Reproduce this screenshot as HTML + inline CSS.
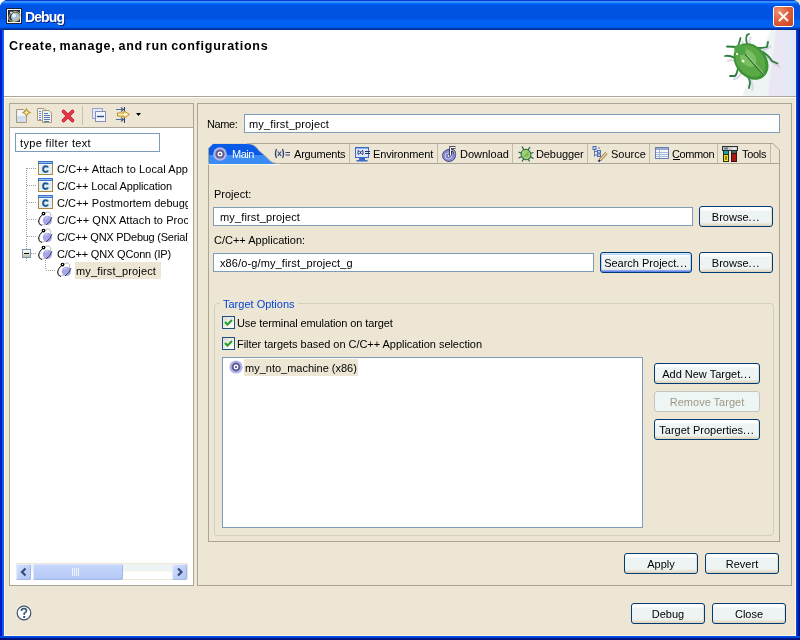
<!DOCTYPE html>
<html><head><meta charset="utf-8">
<style>
*{margin:0;padding:0;box-sizing:border-box}
html,body{width:800px;height:640px;overflow:hidden;background:#fff}
body{font-family:"Liberation Sans",sans-serif;font-size:11px;line-height:13px;color:#000;position:relative;letter-spacing:0}
.a{position:absolute}
.t{position:absolute;white-space:nowrap}
.inp{position:absolute;background:#fff;border:1px solid #7f9db9}
.btn{position:absolute;border:1px solid #003c74;border-radius:3px;background:linear-gradient(#fff 0,#fff 3px,#eef4f4 4px,#eef4f4 calc(100% - 4px),#e8e4d6 calc(100% - 2px),#d8d0bc 100%);box-shadow:inset -1px 0 #e4e0d2;text-align:center;white-space:nowrap}
.btn span{position:absolute;left:0;right:0;top:4px}
.pan{position:absolute;border:1px solid #aca596}
svg{position:absolute;overflow:visible}
</style></head><body><div style="position:absolute;left:0;top:0;width:800px;height:640px;will-change:transform">
<!-- window frame -->
<div class="a" style="left:760px;top:0;width:40px;height:30px;background:#ede6d5"></div>
<div class="a" style="left:0;top:0;width:800px;height:640px;border-radius:8px 8px 0 0;overflow:hidden;background:#001a8c">
 <div class="a" style="left:0;top:0;width:800px;height:30px;background:linear-gradient(#0a3cd0 0,#0a3cd0 1px,#3590ff 1px,#3590ff 3px,#0062f8 3px,#0062f8 5px,#0052e2 5px,#0052e2 19px,#0060f2 20px,#0062f4 27px,#0046cc 28px,#0030a0 29px,#002a90 30px)"></div>
 <div class="a" style="left:0;top:30px;width:4px;height:606px;background:linear-gradient(90deg,#0019cf 0,#0019cf 2px,#0855dd 2px,#0a6af0 4px)"></div>
 <div class="a" style="left:796px;top:30px;width:4px;height:606px;background:linear-gradient(90deg,#0055f0 0,#0040d8 1px,#0020a8 2px,#001090 4px)"></div>
 <div class="a" style="left:0;top:636px;width:800px;height:4px;background:linear-gradient(#0050e8 0,#0040d8 2px,#001a8c 2px,#001070 4px)"></div>
 <div class="a" style="left:4px;top:30px;width:792px;height:606px;background:#ede6d5"></div>
 <div class="a" style="left:4px;top:98px;width:1px;height:538px;background:#fff8e0"></div>
 <div class="a" style="left:4px;top:635px;width:792px;height:1px;background:#fff8e0"></div>
 <div class="a" style="left:795px;top:98px;width:1px;height:538px;background:#fff8e0"></div>
 <div class="a" style="left:4px;top:30px;width:792px;height:66px;background:#fff"></div>
</div>
<!-- title icon -->
<svg style="left:6px;top:8px" width="16" height="16" viewBox="0 0 16 16">
 <rect x="0.5" y="0.5" width="15" height="15" fill="#fff" stroke="#18243a"/>
 <rect x="2" y="2" width="12" height="12" fill="#1a2c4c"/>
 <circle cx="9.5" cy="9" r="4.5" fill="#a8c0d8"/>
 <circle cx="8" cy="7.5" r="2" fill="#e8f2fa"/>
 <ellipse cx="8.5" cy="8.5" rx="6" ry="4.5" transform="rotate(-30 8.5 8.5)" fill="none" stroke="#d8b850" stroke-width="1"/>
 <circle cx="5" cy="4.5" r="1" fill="#f0f0f0"/>
</svg>
<div class="t" style="left:25px;top:9px;font-size:14px;line-height:16px;font-weight:bold;color:#fff;letter-spacing:-0.9px;text-shadow:1px 1px #0a1f7d">Debug</div>
<!-- close button -->
<div class="a" style="left:773px;top:6px;width:21px;height:21px;border:1px solid #fff;border-radius:3px;background:radial-gradient(circle at 25% 25%,#f09070 0,#e0603c 45%,#c8401e 100%)"></div>
<svg style="left:773px;top:6px" width="21" height="21"><path d="M6 6L15 15M15 6L6 15" stroke="#fff" stroke-width="1.8"/></svg>

<!-- header -->
<div class="t" style="left:9px;top:39px;font-weight:bold;font-size:12.5px;line-height:14px;letter-spacing:0.75px;word-spacing:-1.3px">Create, manage, and run configurations</div>
<!-- bug -->
<svg style="left:700px;top:30px" width="96" height="66" viewBox="700 30 96 66">
 <path d="M771 30 L796 30 L796 96 L742 96 Z" fill="#eef4f4"/>
 <path d="M776 30 L796 30 L796 96 L768 96 Z" fill="#ebe6f4"/>
 <path d="M786 30 L796 30 L796 96 L784 96 Z" fill="#e2e8f6"/>
 <g stroke="#c8c0dc" stroke-width="2" fill="none" opacity="0.6">
  <path d="M740 50 L743 41M750 49 Q748 42 751 37M755 50 Q765 52 771 46M765 56 Q772 63 780 67M740 62 Q732 59 727 61M742 72 Q739 79 733 79M749 77 Q754 84 752 91"/>
 </g>
 <g stroke="#2e7e3e" stroke-width="1.8" fill="none" stroke-linecap="round">
  <path d="M738 47 L740.5 38"/><path d="M737 47 L727 46.5"/>
  <path d="M748 46 Q745 40 747 35 L749 34"/><path d="M752 47 Q760 49 767 47 L768 42"/>
  <path d="M763 52 Q770 57 772 61 L777.5 63.5"/><path d="M735 58 Q729 55 725 56"/>
  <path d="M738 68 Q737 74 735 76 L730 76"/><path d="M745 73 Q750 79 750 83 L749 88"/>
 </g>
 <ellipse cx="751" cy="61.5" rx="20" ry="15.5" transform="rotate(50 751 61.5)" fill="#3f9436"/>
 <ellipse cx="750.5" cy="61" rx="17.5" ry="13" transform="rotate(50 750.5 61)" fill="#5aa846"/>
 <ellipse cx="748" cy="58" rx="10" ry="7" transform="rotate(50 748 58)" fill="#78c060"/>
 <ellipse cx="740" cy="50" rx="6" ry="5" transform="rotate(30 740 50)" fill="#4fa444"/>
 <path d="M745 54 L763 74" stroke="#2a6a2a" stroke-width="1.4"/>
 <path d="M746.5 54.5 L763.5 73.5" stroke="#c8ecb8" stroke-width="0.8"/>
 <circle cx="743" cy="61" r="1.5" fill="#e8f4e0"/>
 <circle cx="737" cy="54" r="1.2" fill="#e8f4e0"/>
</svg>
<!-- separator -->
<div class="a" style="left:4px;top:96px;width:792px;height:1px;background:#aca596"></div>
<div class="a" style="left:4px;top:97px;width:792px;height:1px;background:#fff"></div>

<!-- LEFT PANEL -->
<div class="pan" style="left:9px;top:103px;width:185px;height:483px;background:#fff"></div>
<div class="a" style="left:10px;top:104px;width:183px;height:24px;background:#ede6d5;border-bottom:1px solid #aca596"></div>
<!-- toolbar icons -->
<svg style="left:16px;top:108px" width="16" height="16" viewBox="0 0 16 16">
 <path d="M0.5 1.5H7.5L10.5 4.5V14.5H0.5Z" fill="#f0f4fa" stroke="#a89a70"/>
 <rect x="1" y="8" width="9" height="6" fill="#d2def0"/>
 <path d="M10.5 0.5L11.6 3.4L14.5 4.5L11.6 5.6L10.5 8.5L9.4 5.6L6.5 4.5L9.4 3.4Z" fill="#fff0a0" stroke="#b08a20" stroke-width="1"/>
</svg>
<svg style="left:37px;top:108px" width="16" height="16" viewBox="0 0 16 16">
 <path d="M0.5 0.5H7L9.5 3V12.5H0.5Z" fill="#eef2f8" stroke="#a89a70"/>
 <path d="M5.5 2.5H12L14.5 5V14.5H5.5Z" fill="#eef2f8" stroke="#a89a70"/>
 <path d="M2 3.5H4M2 5.5H4M2 7.5H4M2 9.5H4M2 11.5H4" stroke="#7890b8" stroke-width="1"/>
 <path d="M7 5.5H11M7 7.5H13M7 9.5H13M7 11.5H13M7 13.5H12" stroke="#5878b0" stroke-width="1"/>
</svg>
<svg style="left:60px;top:108px" width="16" height="16" viewBox="0 0 16 16">
 <path d="M3.5 3.5L12.5 12.5M12.5 3.5L3.5 12.5" stroke="#c01830" stroke-width="3.6" stroke-linecap="round"/>
 <path d="M3.5 3.5L12.5 12.5M12.5 3.5L3.5 12.5" stroke="#e83848" stroke-width="2.2" stroke-linecap="round"/>
</svg>
<div class="a" style="left:82px;top:106px;width:1px;height:19px;background:#c5c2b2"></div>
<svg style="left:92px;top:108px" width="16" height="16" viewBox="0 0 16 16">
 <rect x="0.5" y="0.5" width="10" height="10" fill="#dfe8f6" stroke="#9aa4cc"/>
 <rect x="3.5" y="3.5" width="10" height="10" fill="#f2f6fc" stroke="#8a8cb8"/>
 <path d="M5 8.5H12" stroke="#2a4a8a" stroke-width="1.4"/>
</svg>
<svg style="left:114px;top:107px" width="17" height="16" viewBox="0 0 17 16">
 <path d="M2 2.5H9M2 12.5H9" stroke="#5a6c96" stroke-width="1"/>
 <path d="M7 0.5L9.5 2.5L7 4.5M7 10.5L9.5 12.5L7 14.5" stroke="#4a5c86" stroke-width="1.2" fill="none"/>
 <path d="M10.5 0V5M10.5 10V16" stroke="#2a3c6e" stroke-width="1"/>
 <path d="M3.5 6H10V4L15.5 7.5L10 11V9H3.5Z" fill="#fff2c0" stroke="#c08a18" stroke-width="1"/>
</svg>
<svg style="left:136px;top:113px" width="6" height="4"><path d="M0 0H5L2.5 3Z" fill="#000"/></svg>

<div class="inp t" style="left:15px;top:133px;width:145px;height:19px;padding:3px 0 0 4px;letter-spacing:0.35px">type filter text</div>

<!-- tree -->
<svg style="left:0;top:0" width="200" height="300">
 <path d="M26.5 168V250M26.5 258V262" stroke="#a0a0a0" stroke-dasharray="1 1" fill="none"/>
 <path d="M27 168.5H37M27 185.5H37M27 202.5H37M27 219.5H37M27 236.5H37M31 253.5H37M45.5 258V270M46 270.5H56" stroke="#a0a0a0" stroke-dasharray="1 1" fill="none"/>
</svg>
<div class="a" style="left:22px;top:249px;width:9px;height:9px;border:1px solid #7898b5;background:linear-gradient(#fff,#c4bda8)"></div>
<div class="a" style="left:24px;top:253px;width:5px;height:1px;background:#000"></div>

<div id="cicons"></div>
<svg style="left:38px;top:161px" width="15" height="14" viewBox="0 0 15 14"><rect x="0" y="0" width="15" height="14" fill="#a88a3a"/><rect x="1" y="3" width="13" height="10" fill="#e4eef8"/><rect x="1" y="3" width="13" height="1" fill="#f4faff"/><rect x="0" y="0" width="15" height="3" fill="#3a70c8"/><rect x="1" y="1" width="13" height="1" fill="#90c0ee"/><path d="M10 6.6Q9.6 5.2 7.6 5.2Q5.1 5.2 5.1 8.1Q5.1 11 7.6 11Q9.6 11 10 9.6" stroke="#1f5a88" stroke-width="1.9" fill="none"/></svg>
<svg style="left:38px;top:178px" width="15" height="14" viewBox="0 0 15 14"><rect x="0" y="0" width="15" height="14" fill="#a88a3a"/><rect x="1" y="3" width="13" height="10" fill="#e4eef8"/><rect x="1" y="3" width="13" height="1" fill="#f4faff"/><rect x="0" y="0" width="15" height="3" fill="#3a70c8"/><rect x="1" y="1" width="13" height="1" fill="#90c0ee"/><path d="M10 6.6Q9.6 5.2 7.6 5.2Q5.1 5.2 5.1 8.1Q5.1 11 7.6 11Q9.6 11 10 9.6" stroke="#1f5a88" stroke-width="1.9" fill="none"/></svg>
<svg style="left:38px;top:195px" width="15" height="14" viewBox="0 0 15 14"><rect x="0" y="0" width="15" height="14" fill="#a88a3a"/><rect x="1" y="3" width="13" height="10" fill="#e4eef8"/><rect x="1" y="3" width="13" height="1" fill="#f4faff"/><rect x="0" y="0" width="15" height="3" fill="#3a70c8"/><rect x="1" y="1" width="13" height="1" fill="#90c0ee"/><path d="M10 6.6Q9.6 5.2 7.6 5.2Q5.1 5.2 5.1 8.1Q5.1 11 7.6 11Q9.6 11 10 9.6" stroke="#1f5a88" stroke-width="1.9" fill="none"/></svg>
<svg style="left:37px;top:211px" width="16" height="16" viewBox="0 0 16 16"><ellipse cx="8" cy="7.5" rx="7.6" ry="4.3" transform="rotate(-52 8 7.5)" fill="none" stroke="#b8b8c0" stroke-width="0.9"/><path d="M6 3Q2 6 1.5 10Q1.5 14 5 14.5" stroke="#2a2a2a" stroke-width="1" fill="none"/><circle cx="10.4" cy="9.4" r="4.6" fill="#a6a6ea"/><path d="M8 7.5Q9 6 11 6" stroke="#dcdcf8" stroke-width="1" fill="none"/><path d="M15 6Q13.5 11 9 14" stroke="#303040" stroke-width="0.9" fill="none"/><circle cx="6.5" cy="2.6" r="1.9" fill="#000"/><circle cx="6.5" cy="2.4" r="0.6" fill="#fff"/></svg>
<svg style="left:37px;top:228px" width="16" height="16" viewBox="0 0 16 16"><ellipse cx="8" cy="7.5" rx="7.6" ry="4.3" transform="rotate(-52 8 7.5)" fill="none" stroke="#b8b8c0" stroke-width="0.9"/><path d="M6 3Q2 6 1.5 10Q1.5 14 5 14.5" stroke="#2a2a2a" stroke-width="1" fill="none"/><circle cx="10.4" cy="9.4" r="4.6" fill="#a6a6ea"/><path d="M8 7.5Q9 6 11 6" stroke="#dcdcf8" stroke-width="1" fill="none"/><path d="M15 6Q13.5 11 9 14" stroke="#303040" stroke-width="0.9" fill="none"/><circle cx="6.5" cy="2.6" r="1.9" fill="#000"/><circle cx="6.5" cy="2.4" r="0.6" fill="#fff"/></svg>
<svg style="left:37px;top:245px" width="16" height="16" viewBox="0 0 16 16"><ellipse cx="8" cy="7.5" rx="7.6" ry="4.3" transform="rotate(-52 8 7.5)" fill="none" stroke="#b8b8c0" stroke-width="0.9"/><path d="M6 3Q2 6 1.5 10Q1.5 14 5 14.5" stroke="#2a2a2a" stroke-width="1" fill="none"/><circle cx="10.4" cy="9.4" r="4.6" fill="#a6a6ea"/><path d="M8 7.5Q9 6 11 6" stroke="#dcdcf8" stroke-width="1" fill="none"/><path d="M15 6Q13.5 11 9 14" stroke="#303040" stroke-width="0.9" fill="none"/><circle cx="6.5" cy="2.6" r="1.9" fill="#000"/><circle cx="6.5" cy="2.4" r="0.6" fill="#fff"/></svg>
<div class="a" style="left:75px;top:262px;width:86px;height:17px;background:#ede6d5"></div>
<svg style="left:56px;top:262px" width="16" height="16" viewBox="0 0 16 16"><ellipse cx="8" cy="7.5" rx="7.6" ry="4.3" transform="rotate(-52 8 7.5)" fill="none" stroke="#b8b8c0" stroke-width="0.9"/><path d="M6 3Q2 6 1.5 10Q1.5 14 5 14.5" stroke="#2a2a2a" stroke-width="1" fill="none"/><circle cx="10.4" cy="9.4" r="4.6" fill="#a6a6ea"/><path d="M8 7.5Q9 6 11 6" stroke="#dcdcf8" stroke-width="1" fill="none"/><path d="M15 6Q13.5 11 9 14" stroke="#303040" stroke-width="0.9" fill="none"/><circle cx="6.5" cy="2.6" r="1.9" fill="#000"/><circle cx="6.5" cy="2.4" r="0.6" fill="#fff"/></svg>

<div class="a" style="left:57px;top:160px;width:131px;height:120px;overflow:hidden">
 <div class="t" style="left:0;top:3px;letter-spacing:0.08px">C/C++ Attach to Local Application</div>
 <div class="t" style="left:0;top:20px;letter-spacing:-0.1px">C/C++ Local Application</div>
 <div class="t" style="left:0;top:37px">C/C++ Postmortem debugger</div>
 <div class="t" style="left:0;top:54px;letter-spacing:0.08px">C/C++ QNX Attach to Process</div>
 <div class="t" style="left:0;top:71px;letter-spacing:-0.25px">C/C++ QNX PDebug (Serial)</div>
 <div class="t" style="left:0;top:88px;letter-spacing:-0.17px">C/C++ QNX QConn (IP)</div>
</div>
<div class="t" style="left:76px;top:265px;letter-spacing:0.15px">my_first_project</div>

<!-- scrollbar -->
<div class="a" style="left:16px;top:563px;width:172px;height:17px;border:1px solid #efe6d4;border-left:0;background:linear-gradient(#eef4f4 0,#eef4f4 7px,#fdf8ea 7px,#fff 9px)"></div>
<div class="a" style="left:16px;top:564px;width:15px;height:16px;border-radius:3px;background:linear-gradient(135deg,#d6e2fd,#bccff8 60%,#b2c6f6);box-shadow:inset -1px -1px #9fb6ee,inset 1px 1px #e4ecfe"></div>
<svg style="left:16px;top:564px" width="15" height="16"><path d="M9.5 4.5L6 8L9.5 11.5" stroke="#3a4c78" stroke-width="2.2" fill="none"/></svg>
<div class="a" style="left:33px;top:564px;width:90px;height:16px;border-radius:3px;background:linear-gradient(#c8d8fb,#bccff9 50%,#b4c8f6);box-shadow:inset -1px -1px #a0b6ee,inset 1px 1px #d8e4fd"></div>
<svg style="left:72px;top:568px" width="8" height="8"><path d="M0.5 0V8M2.5 0V8M4.5 0V8M6.5 0V8" stroke="#f0f4fe" stroke-width="1"/></svg>
<div class="a" style="left:172px;top:564px;width:15px;height:16px;border-radius:3px;background:linear-gradient(135deg,#d6e2fd,#bccff8 60%,#b2c6f6);box-shadow:inset -1px -1px #9fb6ee,inset 1px 1px #e4ecfe"></div>
<svg style="left:172px;top:564px" width="15" height="16"><path d="M6 4.5L9.5 8L6 11.5" stroke="#3a4c78" stroke-width="2.2" fill="none"/></svg>

<!-- RIGHT PANEL -->
<div class="pan" style="left:197px;top:103px;width:595px;height:483px"></div>
<div class="t" style="left:207px;top:118px;letter-spacing:-0.4px">Name:</div>
<div class="inp t" style="left:244px;top:114px;width:536px;height:19px;padding:3px 0 0 4px;letter-spacing:0.15px">my_first_project</div>

<!-- tabs -->
<div class="a" style="left:208px;top:163px;width:572px;height:379px;border:1px solid #aca596"></div>
<svg style="left:0;top:0" width="800" height="170">
 <defs><clipPath id="mt"><path d="M209 164V148L213 144H247C253 144 256 147 259 151L267 158C271 162 273 164 279 164Z"/></clipPath></defs>
 <path d="M349.5 144V163M437.5 144V163M512.5 144V163M587.5 144V163M649.5 144V163M717.5 144V163M770.5 144V163" stroke="#c0bcac"/>
 <path d="M247 143.5H773L779.5 150V163" stroke="#aca596" fill="none"/>
 <path d="M208.5 165V148" stroke="#aca596" fill="none"/><path d="M208.5 148L213 143.5H247" stroke="#e0d8c0" fill="none"/>
 <path d="M247 143.5C253 143.5 256.5 147 259.5 151L267.5 158C271.5 162 273.5 163.5 279 163.5" stroke="#b8b0a0" fill="none"/>
 <g clip-path="url(#mt)"><rect x="200" y="140" width="90" height="15" fill="#0a5ae8"/><rect x="200" y="155" width="90" height="10" fill="#3a8cf4"/></g>
 <path d="M208 164H209M209 164.5H281" stroke="#fff8e8"/>
</svg>
<svg style="left:213px;top:147px" width="15" height="15" viewBox="0 0 15 15"><circle cx="7" cy="7" r="6.8" fill="#b4b4ea"/><circle cx="7" cy="7" r="4.6" fill="#5c5c92"/><circle cx="7" cy="7" r="2.5" fill="#fff"/><circle cx="7" cy="7" r="1.1" fill="#4a4a80"/></svg>
<div class="t" style="left:232px;top:148px;color:#fff;letter-spacing:-0.5px">Main</div>
<svg style="left:274px;top:148px" width="17" height="12" viewBox="0 0 17 12"><path d="M2.5 1Q0.5 5.5 2.5 10M8.5 1Q10.5 5.5 8.5 10" stroke="#2c446c" stroke-width="1.3" fill="none"/><path d="M3.8 3.5L7.2 8M7.2 3.5L3.8 8" stroke="#2c446c" stroke-width="1.1"/><path d="M11.5 4.5H16M11.5 7H16" stroke="#2c446c" stroke-width="1.1"/></svg>
<div class="t" style="left:294px;top:148px;letter-spacing:-0.2px">Arguments</div>
<svg style="left:355px;top:146px" width="16" height="16" viewBox="0 0 16 16"><rect x="0.5" y="1.5" width="13" height="10" fill="#dce8fc" stroke="#3a6ac8"/><rect x="1" y="2" width="12" height="1" fill="#8ab0f0"/><rect x="4" y="12" width="6" height="2" fill="#3a6ac8"/><rect x="1.5" y="14" width="11" height="1.5" fill="#3a6ac8"/><path d="M3.5 4Q2.3 6.5 3.5 9M7.5 4Q8.7 6.5 7.5 9M4.5 5L6.5 8M6.5 5L4.5 8" stroke="#24346a" stroke-width="1" fill="none"/><path d="M10 5.5H15M10 7.5H15" stroke="#24346a" stroke-width="1"/></svg>
<div class="t" style="left:373px;top:148px;letter-spacing:-0.15px">Environment</div>
<svg style="left:442px;top:146px" width="16" height="16" viewBox="0 0 16 16"><ellipse cx="7" cy="9.5" rx="6.5" ry="6" fill="#8a8cd0" stroke="#4a4a86"/><ellipse cx="6.5" cy="10" rx="3.5" ry="3" fill="none" stroke="#c4c4f0" stroke-width="1"/><circle cx="6.5" cy="10" r="1.3" fill="#fff" stroke="#3a3a70" stroke-width="0.6"/><path d="M8.5 9.5V1.5H13.5M8.5 4Q13 4 13 8.5" stroke="#1c1c40" stroke-width="2.4" fill="none"/><path d="M8.5 9.5V1.5H13.5M8.5 4Q13 4 13 8.5" stroke="#fff" stroke-width="1" fill="none"/></svg>
<div class="t" style="left:460px;top:148px">Download</div>
<svg style="left:518px;top:146px" width="16" height="16" viewBox="0 0 16 16"><g stroke="#1e5a4a" stroke-width="1.2" fill="none"><path d="M4 0.5L6 4M12 1L10 4M0.5 6L4 7.5M15.5 6.5L12 7.5M0.5 12L4 10.5M15.5 12.5L12 10.5M4 15.5L6 12.5M11.5 15.5L10 12.5"/></g><ellipse cx="8" cy="8.5" rx="4.8" ry="5.3" transform="rotate(-30 8 8.5)" fill="#9ed070" stroke="#2a6a4a"/><path d="M5.5 11.5L11 5.5" stroke="#5a9a50" stroke-width="0.8"/><ellipse cx="9" cy="9" rx="2" ry="1.5" fill="#7ab858"/></svg>
<div class="t" style="left:536px;top:148px;letter-spacing:-0.1px">Debugger</div>
<svg style="left:592px;top:146px" width="16" height="16" viewBox="0 0 16 16"><path d="M2.5 2V10.5M2.5 5.5H6M2.5 9H6M6 2H8" stroke="#5a7ac0" fill="none"/><rect x="1" y="0.5" width="3" height="3" fill="#c8d8f4" stroke="#4a6ab0" stroke-width="1"/><rect x="5.5" y="4.5" width="3" height="2.5" fill="#c8d8f4" stroke="#4a6ab0" stroke-width="1"/><rect x="5.5" y="8" width="3" height="2.5" fill="#c8d8f4" stroke="#4a6ab0" stroke-width="1"/><path d="M8 14L14.5 7" stroke="#8a7040" stroke-width="3"/><path d="M8 14L14.5 7" stroke="#f0d890" stroke-width="1.6"/><path d="M6.5 15.5L8 14" stroke="#203060" stroke-width="2"/></svg>
<div class="t" style="left:611px;top:148px">Source</div>
<svg style="left:655px;top:147px" width="14" height="12" viewBox="0 0 14 12"><rect x="0.5" y="0.5" width="13" height="11" fill="#f4f8fc" stroke="#6a80b0"/><rect x="1" y="1" width="12" height="2" fill="#96aad0"/><path d="M1 5.5H13M1 7.5H13M1 9.5H13M4.5 3V11" stroke="#a4b8dc"/></svg>
<div class="t" style="left:672px;top:148px;letter-spacing:-0.4px">Common</div>
<div class="a" style="left:673px;top:159px;width:7px;height:1px;background:#000"></div>
<svg style="left:722px;top:146px" width="16" height="16" viewBox="0 0 16 16"><rect x="0.5" y="0.5" width="15" height="4" fill="#c8cccc" stroke="#283030"/><rect x="2" y="1.5" width="4" height="2" fill="#707878"/><rect x="10" y="1.5" width="4" height="2" fill="#f0f0f0"/><rect x="1.5" y="4.5" width="5" height="4" fill="#20a0a0" stroke="#183838"/><rect x="1.5" y="8.5" width="5" height="7" fill="#f0e020" stroke="#303010"/><path d="M4 10V14" stroke="#303010"/><rect x="9.5" y="4.5" width="5" height="3" fill="#506060" stroke="#183838"/><rect x="9.5" y="7.5" width="5" height="8" fill="#a81818" stroke="#401010"/></svg>
<div class="t" style="left:742px;top:148px;letter-spacing:-0.3px">Tools</div>

<!-- main tab content -->
<div class="t" style="left:214px;top:188px">Project:</div>
<div class="inp t" style="left:213px;top:207px;width:480px;height:19px;padding:3px 0 0 6px;letter-spacing:0.15px">my_first_project</div>
<div class="btn" style="left:699px;top:206px;width:74px;height:21px"><span>Browse<i style="font-style:normal;letter-spacing:0.8px">...</i></span></div>
<div class="t" style="left:214px;top:234px">C/C++ Application:</div>
<div class="inp t" style="left:213px;top:253px;width:381px;height:19px;padding:3px 0 0 6px;letter-spacing:0.12px">x86/o-g/my_first_project_g</div>
<div class="btn" style="left:600px;top:252px;width:92px;height:21px;box-shadow:inset 0 1px #cee7ff,inset 0 -1px #6982ee,inset 1px 0 #b8d0f9,inset -1px 0 #b8d0f9,inset 0 2px #bcd4f6,inset 0 -2px #89adf0"><span>Search Project<i style="font-style:normal;letter-spacing:0.8px">...</i></span></div>
<div class="btn" style="left:699px;top:252px;width:74px;height:21px"><span>Browse<i style="font-style:normal;letter-spacing:0.8px">...</i></span></div>

<!-- group -->
<div class="a" style="left:214px;top:303px;width:560px;height:233px;border:1px solid #d0d0bf;border-radius:4px"></div>
<div class="t" style="left:220px;top:298px;padding:0 3px;background:#ede6d5;color:#0046d5">Target Options</div>
<div class="a" style="left:222px;top:316px;width:13px;height:13px;border:1px solid #1c5180;background:linear-gradient(135deg,#dcdcd7,#fff)"></div>
<svg style="left:222px;top:316px" width="13" height="13"><path d="M3 6L5.5 8.5L10 4" stroke="#21a121" stroke-width="2" fill="none"/></svg>
<div class="t" style="left:237px;top:317px;letter-spacing:-0.1px">Use terminal emulation on target</div>
<div class="a" style="left:222px;top:337px;width:13px;height:13px;border:1px solid #1c5180;background:linear-gradient(135deg,#dcdcd7,#fff)"></div>
<svg style="left:222px;top:337px" width="13" height="13"><path d="M3 6L5.5 8.5L10 4" stroke="#21a121" stroke-width="2" fill="none"/></svg>
<div class="t" style="left:237px;top:338px;letter-spacing:-0.04px">Filter targets based on C/C++ Application selection</div>

<div class="inp" style="left:222px;top:357px;width:421px;height:171px"></div>
<div class="a" style="left:244px;top:359px;width:114px;height:17px;background:#ede6d5"></div>
<svg style="left:229px;top:360px" width="14" height="14" viewBox="0 0 14 14"><circle cx="7" cy="7" r="6.6" fill="#b4b4ea"/><circle cx="7" cy="7" r="4.4" fill="#5c5c92"/><circle cx="7" cy="7" r="2.4" fill="#fff"/><circle cx="7" cy="7" r="1.1" fill="#4a4a80"/></svg>
<div class="t" style="left:245px;top:362px">my_nto_machine (x86)</div>

<div class="btn" style="left:654px;top:363px;width:106px;height:21px"><span>Add New Target<i style="font-style:normal;letter-spacing:0.8px">...</i></span></div>
<div class="btn" style="left:654px;top:391px;width:106px;height:21px;border-color:#c4c4c0;background:#eef5f5;box-shadow:none;color:#a09884"><span>Remove Target</span></div>
<div class="btn" style="left:654px;top:419px;width:106px;height:21px"><span>Target Properties<i style="font-style:normal;letter-spacing:0.8px">...</i></span></div>

<div class="btn" style="left:624px;top:553px;width:74px;height:21px"><span>Apply</span></div>
<div class="btn" style="left:705px;top:553px;width:74px;height:21px"><span>Revert</span></div>

<!-- help -->
<svg style="left:16px;top:605px" width="16" height="16" viewBox="0 0 16 16"><circle cx="8" cy="8" r="6.8" fill="#fff" stroke="#3a5070" stroke-width="1.2"/><path d="M5.5 6Q5.5 3.5 8 3.5Q10.5 3.5 10.5 5.8Q10.5 7.3 8.2 8.2V10" stroke="#3a5070" stroke-width="1.6" fill="none"/><rect x="7.2" y="11" width="2" height="2" fill="#3a5070"/></svg>

<!-- bottom -->
<div class="btn" style="left:631px;top:603px;width:74px;height:21px"><span>Debug</span></div>
<div class="btn" style="left:712px;top:603px;width:74px;height:21px"><span>Close</span></div>
</div></body></html>
